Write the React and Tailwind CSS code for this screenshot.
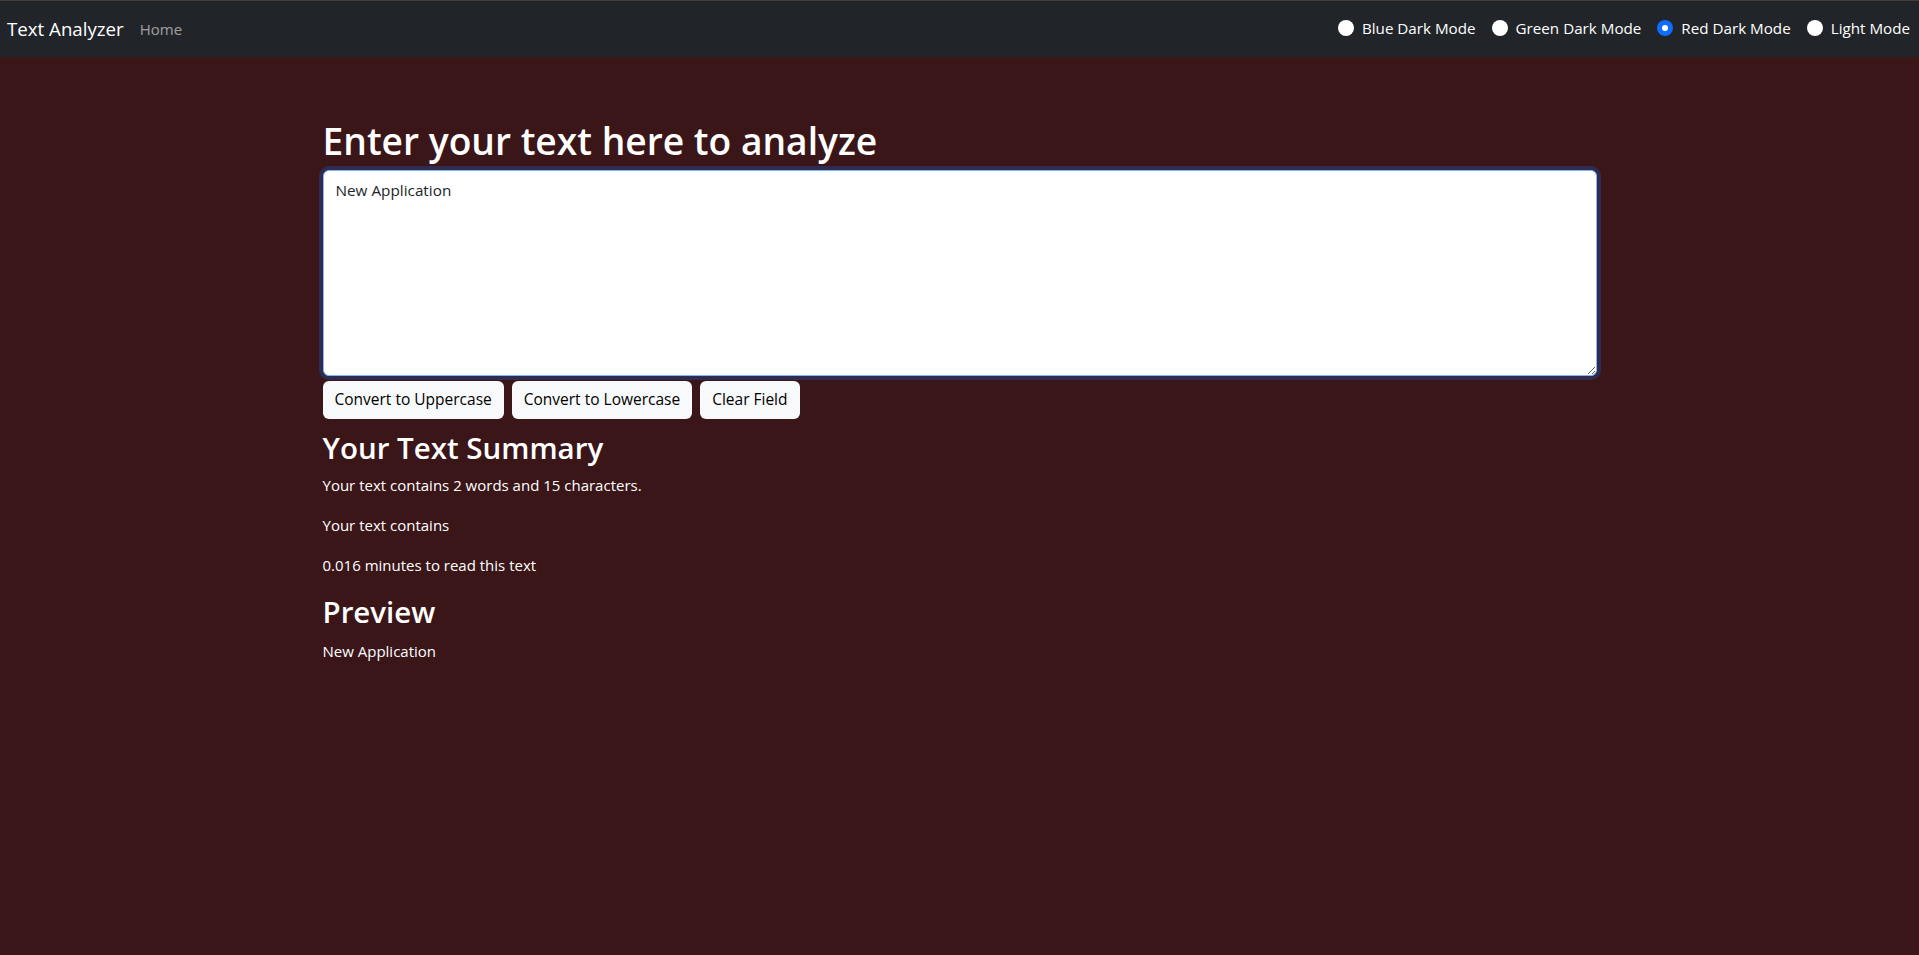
import React, { useState, useEffect, useRef } from 'react';

const modes = ['Blue Dark Mode', 'Green Dark Mode', 'Red Dark Mode', 'Light Mode'];

function Navbar({ mode, setMode }) {
  return (
    <nav className="h-[57px] bg-[#212529] border-t border-[#45393b] flex items-center justify-between pl-[7px] pr-[9px]">
      <div className="flex items-center">
        <span className="text-[18.7px] text-white mr-[16px]">Text Analyzer</span>
        <a href="#" className="text-[15px] text-white/55">Home</a>
      </div>
      <div className="flex items-center gap-4 -mt-[2px]">
        {modes.map((m) => (
          <label key={m} className="flex items-center gap-2 text-[15.2px] text-white cursor-pointer">
            <span
              className={
                m === mode
                  ? 'w-4 h-4 rounded-full bg-[#0d6efd] flex items-center justify-center'
                  : 'w-4 h-4 rounded-full bg-white'
              }
              onClick={() => setMode(m)}
            >
              {m === mode && <span className="w-[6px] h-[6px] rounded-full bg-white" />}
            </span>
            {m}
          </label>
        ))}
      </div>
    </nav>
  );
}

export default function App() {
  const [mode, setMode] = useState('Red Dark Mode');
  const [text, setText] = useState('New Application');
  const areaRef = useRef(null);

  useEffect(() => {
    const el = areaRef.current;
    if (el) {
      el.focus();
      el.setSelectionRange(el.value.length, el.value.length);
    }
  }, []);

  const words = text.split(/\s+/).filter((w) => w.length > 0).length;

  return (
    <div className="min-h-screen bg-[#3a1618] font-['Open_Sans',sans-serif]">
      <Navbar mode={mode} setMode={setMode} />

      <div className="mx-auto w-[1274px] pt-[60px] text-white">
        <h1 className="text-[37.2px] font-semibold leading-[48px] mb-[5px]">Enter your text here to analyze</h1>
        <textarea
          ref={areaRef}
          rows={8}
          value={text}
          onChange={(e) => setText(e.target.value)}
          className="block w-full h-[206px] bg-white text-[#212529] text-[15.3px] leading-6 px-3 pt-[7px] pb-[6px] rounded-md border border-[#86b7fe] shadow-[0_0_0_4px_rgba(13,110,253,0.25)] outline-none caret-[#212529]"
        />
        <div className="flex gap-2 mt-[5px]">
          <button onClick={() => setText(text.toUpperCase())} className="h-[38px] px-3 rounded-md bg-[#f8f9fa] text-[#000] text-[15.5px]">Convert to Uppercase</button>
          <button onClick={() => setText(text.toLowerCase())} className="h-[38px] px-3 rounded-md bg-[#f8f9fa] text-[#000] text-[15.5px]">Convert to Lowercase</button>
          <button onClick={() => setText('')} className="h-[38px] px-3 rounded-md bg-[#f8f9fa] text-[#000] text-[15.5px]">Clear Field</button>
        </div>

        <h2 className="text-[29.5px] font-semibold leading-[38px] mt-[10px] mb-[6px]">Your Text Summary</h2>
        <p className="text-[15px] leading-6 mb-4">Your text contains {words} words and {text.length} characters.</p>
        <p className="text-[15px] leading-6 mb-4">Your text contains</p>
        <p className="text-[15px] leading-6 mb-4">{(0.008 * words).toFixed(3)} minutes to read this text</p>
        <h2 className="text-[29.5px] font-semibold leading-[38px] mb-2">Preview</h2>
        <p className="text-[15px] leading-6">{text}</p>
      </div>
    </div>
  );
}
